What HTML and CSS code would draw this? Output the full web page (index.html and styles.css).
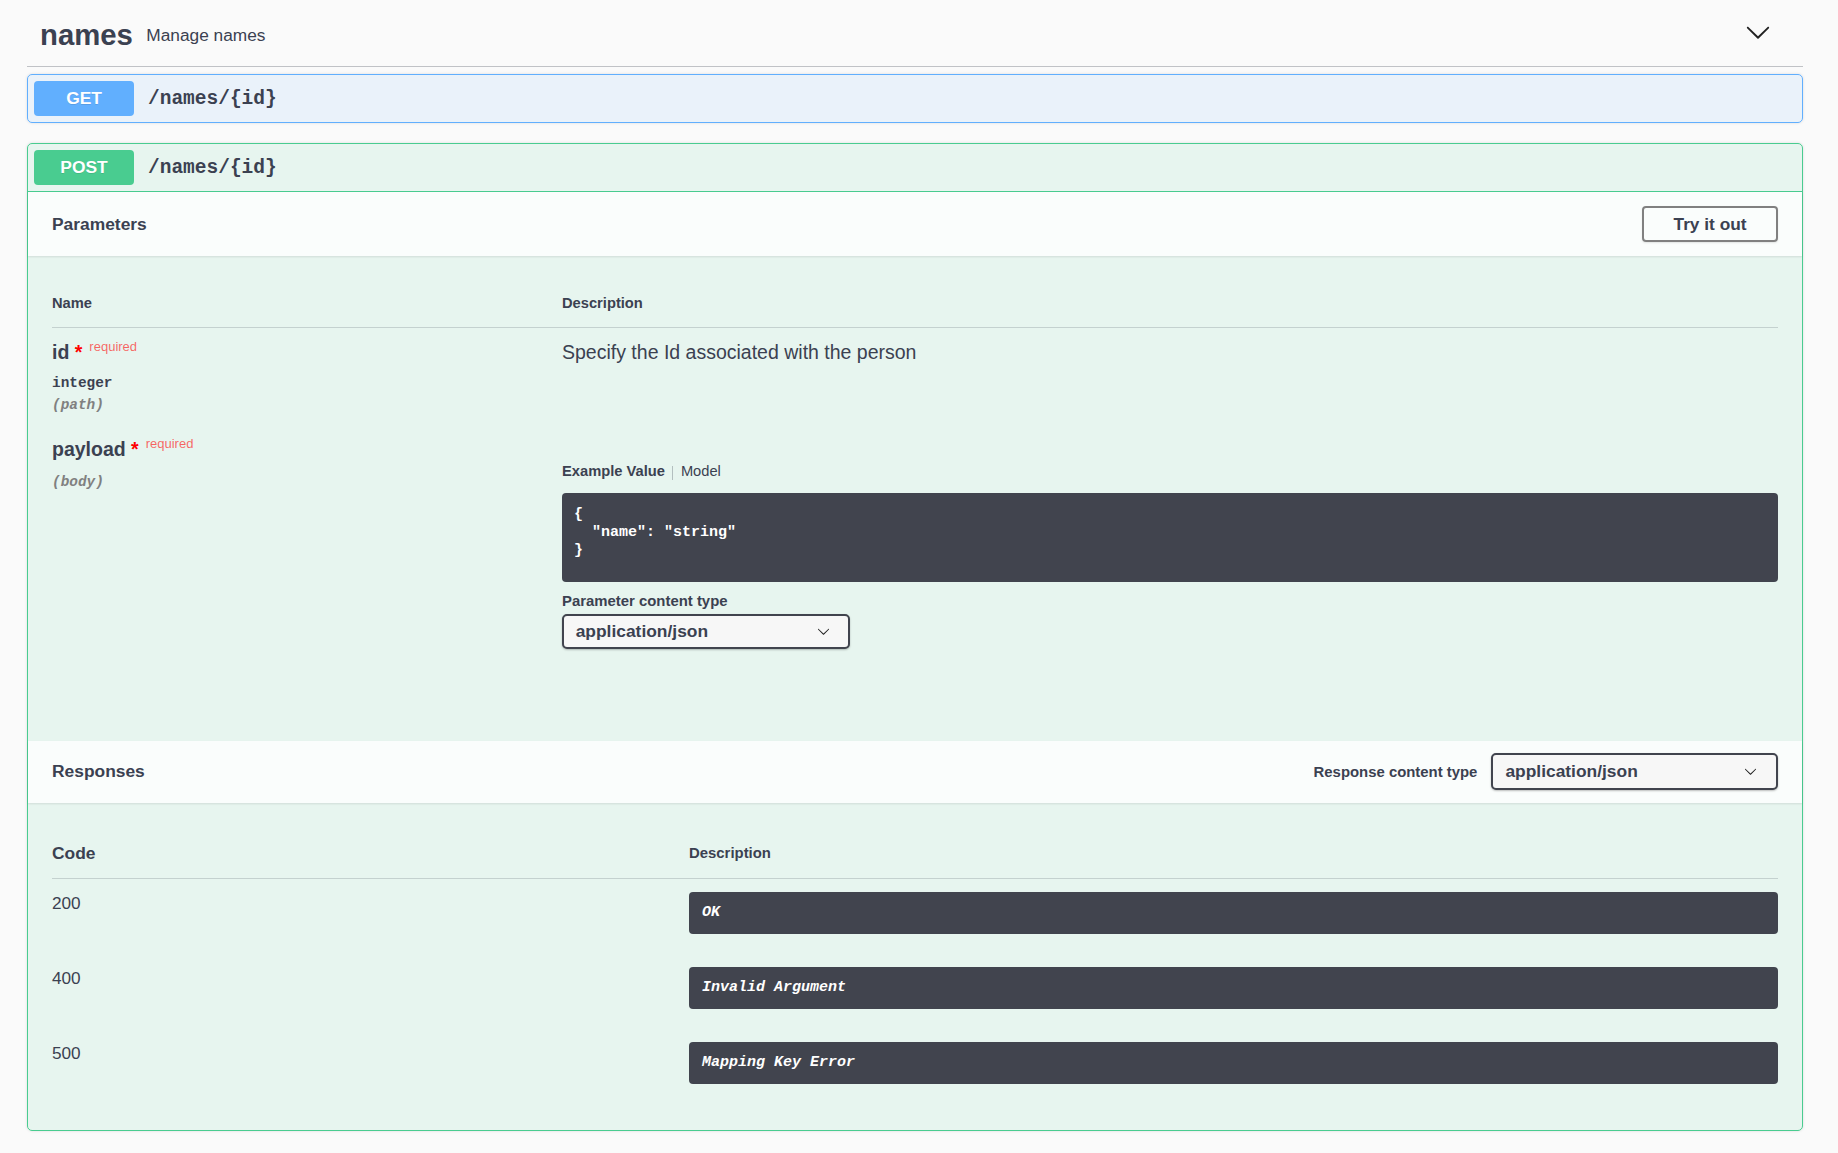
FILE: index.html
```html
<!DOCTYPE html>
<html lang="en">
<head>
<meta charset="utf-8">
<title>names</title>
<link rel="stylesheet" href="styles.css">
</head>
<body>
<div class="wrapper">
  <div class="tag">
    <h4 class="tag-title"><span class="tag-name">names</span><small class="tag-desc">Manage names</small></h4>
    <svg class="tag-arrow" width="26" height="26" viewBox="0 0 20 20"><path d="M17.418 6.109c.272-.268.709-.268.979 0s.271.701 0 .969l-7.908 7.83c-.27.268-.707.268-.979 0l-7.908-7.83c-.27-.268-.27-.701 0-.969.271-.268.709-.268.979 0L10 13.25l7.418-7.141z"/></svg>
  </div>

  <div class="opblock opblock-get">
    <div class="summary">
      <span class="method method-get">GET</span>
      <span class="path">/names/{id}</span>
    </div>
  </div>

  <div class="opblock opblock-post">
    <div class="summary summary-open">
      <span class="method method-post">POST</span>
      <span class="path">/names/{id}</span>
    </div>

    <div class="section-header params-header">
      <h4 class="section-title">Parameters</h4>
      <button class="btn-try">Try it out</button>
    </div>

    <div class="params-body">
      <div class="ptable">
        <div class="th">Name</div>
        <div class="th">Description</div>

        <div class="td td-row1">
          <div class="pname">id<span class="star">&nbsp;*</span><span class="req">required</span></div>
          <div class="ptype">integer</div>
          <div class="pin">(path)</div>
        </div>
        <div class="td td-row1">
          <div class="pdesc">Specify the Id associated with the person</div>
        </div>

        <div class="td">
          <div class="pname">payload<span class="star">&nbsp;*</span><span class="req">required</span></div>
          <div class="pin pin-body">(body)</div>
        </div>
        <div class="td">
          <div class="tabs">
            <span class="tab tab-active">Example Value</span>
            <span class="tab-sep"></span>
            <span class="tab">Model</span>
          </div>
          <pre class="code">{
  "name": "string"
}</pre>
          <div class="label">Parameter content type</div>
          <div class="select select-param">
            <span>application/json</span>
            <svg class="select-arrow" width="13" height="13" viewBox="0 0 20 20"><path d="M17.418 6.109c.272-.268.709-.268.979 0s.271.701 0 .969l-7.908 7.83c-.27.268-.707.268-.979 0l-7.908-7.83c-.27-.268-.27-.701 0-.969.271-.268.709-.268.979 0L10 13.25l7.418-7.141z"/></svg>
          </div>
        </div>
      </div>
    </div>

    <div class="section-header resp-header">
      <h4 class="section-title">Responses</h4>
      <div class="rct">
        <span class="rct-label">Response content type</span>
        <div class="select select-resp">
          <span>application/json</span>
          <svg class="select-arrow" width="13" height="13" viewBox="0 0 20 20"><path d="M17.418 6.109c.272-.268.709-.268.979 0s.271.701 0 .969l-7.908 7.83c-.27.268-.707.268-.979 0l-7.908-7.83c-.27-.268-.27-.701 0-.969.271-.268.709-.268.979 0L10 13.25l7.418-7.141z"/></svg>
        </div>
      </div>
    </div>

    <div class="resp-body">
      <div class="rtable">
        <div class="rth rth-code">Code</div>
        <div class="rth rth-desc">Description</div>

        <div class="rcode">200</div>
        <div class="rdesc"><div class="rbox">OK</div></div>

        <div class="rcode">400</div>
        <div class="rdesc"><div class="rbox">Invalid Argument</div></div>

        <div class="rcode">500</div>
        <div class="rdesc"><div class="rbox">Mapping Key Error</div></div>
      </div>
    </div>
  </div>
</div>
</body>
</html>
```

FILE: styles.css
```css
body {
  margin: 0;
  background: #fafafa;
  font-family: "Liberation Sans", Arial, sans-serif;
  color: #3b4151;
}

.wrapper {
  margin: 0 35px 0 27px;
}

/* tag header */
.tag {
  display: flex;
  align-items: center;
  justify-content: space-between;
  box-sizing: border-box;
  height: 67px;
  padding: 4px 32px 0 13px;
  border-bottom: 1px solid rgba(59, 65, 81, 0.3);
}

.tag-title {
  margin: 0;
  display: flex;
  align-items: center;
  font-weight: bold;
}

.tag-name {
  font-size: 29.3px;
}

.tag-desc {
  font-size: 17.3px;
  font-weight: normal;
  padding-left: 13.5px;
}

.tag-arrow {
  fill: #222;
  margin-bottom: 7px;
}

/* operation blocks */
.opblock {
  border: 1px solid;
  border-radius: 5px;
  margin-bottom: 20px;
  box-shadow: 0 0 3px rgba(0, 0, 0, 0.12);
}

.opblock-get {
  margin-top: 7px;
  border-color: #61affe;
  background: rgba(97, 175, 254, 0.1);
}

.opblock-post {
  border-color: #49cc90;
  background: rgba(73, 204, 144, 0.1);
}

.summary {
  display: flex;
  align-items: center;
  padding: 6px;
}

.summary-open {
  border-bottom: 1px solid #49cc90;
}

.method {
  width: 100px;
  height: 35px;
  line-height: 35px;
  text-align: center;
  border-radius: 4px;
  color: #fff;
  font-weight: bold;
  font-size: 17.4px;
  text-shadow: 0 1px 0 rgba(0, 0, 0, 0.1);
}

.method-get {
  background: #61affe;
}

.method-post {
  background: #49cc90;
}

.path {
  margin-left: 14px;
  font-family: "Liberation Mono", "Courier New", monospace;
  font-weight: bold;
  font-size: 19.5px;
  color: #3b4151;
}

/* section headers */
.section-header {
  display: flex;
  align-items: center;
  justify-content: space-between;
  padding: 0 24px;
  background: rgba(255, 255, 255, 0.8);
  box-shadow: 0 1px 2px rgba(0, 0, 0, 0.1);
}

.params-header {
  height: 64px;
}

.resp-header {
  height: 62px;
}

.section-title {
  margin: 0;
  font-size: 17.4px;
  font-weight: bold;
}

.btn-try {
  font-family: inherit;
  font-size: 17.3px;
  font-weight: bold;
  line-height: 20px;
  color: #3b4151;
  background: transparent;
  border: 2px solid #808080;
  border-radius: 4px;
  padding: 6px 29.5px;
  box-shadow: 0 1px 2px rgba(0, 0, 0, 0.1);
}

/* parameters */
.params-body {
  padding: 24px;
}

.ptable {
  display: grid;
  grid-template-columns: 510px 1fr;
}

.th {
  font-size: 14.7px;
  font-weight: bold;
  line-height: 17px;
  padding: 15px 0;
  border-bottom: 1px solid rgba(59, 65, 81, 0.2);
}

.td {
  padding-top: 12px;
}

.td-row1 {
  padding-bottom: 11px;
}

.pname {
  font-size: 19.5px;
  font-weight: bold;
  line-height: 24px;
}

.star {
  color: red;
}

.req {
  position: relative;
  top: -8px;
  padding-left: 7px;
  font-size: 13px;
  font-weight: normal;
  color: rgba(255, 0, 0, 0.6);
}

.ptype {
  font-family: "Liberation Mono", "Courier New", monospace;
  font-weight: bold;
  font-size: 14.4px;
  line-height: 17px;
  margin-top: 7.5px;
}

.pin {
  font-family: "Liberation Mono", "Courier New", monospace;
  font-style: italic;
  font-weight: bold;
  font-size: 14.4px;
  line-height: 17px;
  color: #808080;
  margin-top: 5px;
}

.pin-body {
  margin-top: 10.5px;
}

.pdesc {
  font-size: 19.5px;
  line-height: 24px;
}

.tabs {
  display: flex;
  align-items: center;
  margin-top: 26px;
  font-size: 14.7px;
  line-height: 17px;
}

.tab-active {
  font-weight: bold;
}

.tab-sep {
  width: 1px;
  height: 14px;
  background: rgba(59, 65, 81, 0.3);
  margin: 3px 8px 0 7px;
}

.code {
  margin: 13px 0 0;
  background: #41444e;
  border-radius: 4px;
  color: #fff;
  font-family: "Liberation Mono", "Courier New", monospace;
  font-weight: bold;
  font-size: 15px;
  line-height: 18px;
  padding: 13px 12px 22.5px;
  white-space: pre;
}

.label {
  margin-top: 11px;
  font-size: 14.9px;
  font-weight: bold;
  line-height: 17px;
}

.select {
  display: flex;
  align-items: center;
  justify-content: space-between;
  box-sizing: border-box;
  border: 2px solid #41444e;
  border-radius: 5px;
  background: #f7f7f7;
  box-shadow: 0 1px 2px rgba(0, 0, 0, 0.25);
  font-size: 17.4px;
  font-weight: bold;
  color: #3b4151;
}

.select-param {
  margin-top: 4px;
  margin-bottom: 67.5px;
  width: 288px;
  height: 35px;
  padding: 0 18px 0 11.7px;
}

.select-resp {
  width: 287px;
  height: 37px;
  padding: 0 19px 0 12.4px;
}

.select-arrow {
  fill: #222;
}

/* responses */
.rct {
  display: flex;
  align-items: center;
  gap: 13.6px;
}

.rct-label {
  font-size: 14.9px;
  font-weight: bold;
}

.resp-body {
  padding: 24px 24px 26px;
}

.rtable {
  display: grid;
  grid-template-columns: 637px 1fr;
}

.rth {
  font-weight: bold;
  line-height: 20px;
  padding: 16px 0 15px;
  border-bottom: 1px solid rgba(59, 65, 81, 0.2);
}

.rth-code {
  font-size: 17.4px;
}

.rth-desc {
  font-size: 14.9px;
}

.rcode {
  padding-top: 14px;
  font-size: 17.2px;
  line-height: 20px;
}

.rdesc {
  padding: 13px 0 20px;
}

.rbox {
  background: #41444e;
  border-radius: 4px;
  color: #fff;
  font-family: "Liberation Mono", "Courier New", monospace;
  font-style: italic;
  font-weight: bold;
  font-size: 15px;
  line-height: 18px;
  padding: 12px 13px;
}
```
